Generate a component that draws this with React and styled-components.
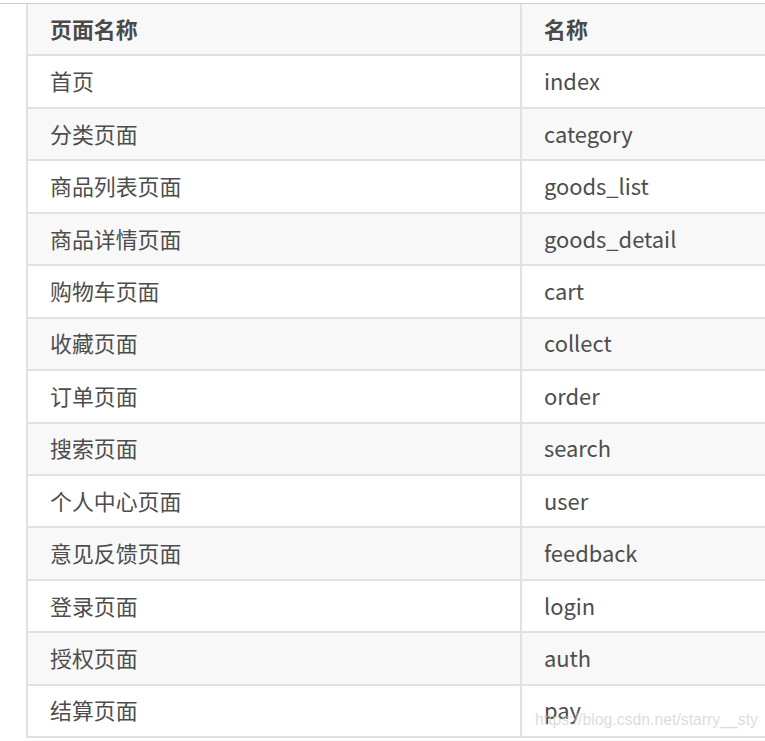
import React from "react";
import styled, { createGlobalStyle } from "styled-components";

const Global = createGlobalStyle`
  html, body { margin: 0; padding: 0; background: #fff; }
  body { overflow: hidden; }
`;

const Page = styled.div`
  width: 765px;
  height: 741px;
  overflow: hidden;
  position: relative;
  background: #fff;
  padding-top: 3px;
  box-sizing: border-box;
`;

const TopRule = styled.div`
  height: 1px;
  background: #cfcfcf;
`;

const Table = styled.div`
  margin-left: 26px;
  width: 800px;
  border-left: 2px solid #dfe2e5;
  font-family: "Noto Sans CJK SC", "Noto Sans", sans-serif;
  font-size: 21.9px;
  color: #4d4d4d;
`;

const Row = styled.div`
  display: grid;
  grid-template-columns: 492px 1fr;
  height: 52.45px;
  box-sizing: border-box;
  border-bottom: 2px solid #dfe2e5;
  background: ${(p) => (p.$shade ? "#f8f8f8" : "#fff")};
  font-weight: ${(p) => (p.$head ? 700 : 400)};
  color: ${(p) => (p.$head ? "#4a4a4a" : "#4d4d4d")};
`;

const Cell = styled.div`
  display: flex;
  align-items: center;
  padding-left: 22px;
  padding-bottom: 1px;
  border-left: ${(p) => (p.$second ? "2px solid #dfe2e5" : "none")};
  white-space: nowrap;
  line-height: 1;
`;

const Watermark = styled.div`
  position: absolute;
  left: 535px;
  top: 711px;
  font-family: "Liberation Sans", Arial, sans-serif;
  font-size: 15.8px;
  color: rgba(205, 205, 205, 0.7);
  white-space: nowrap;
  pointer-events: none;
`;

const rows = [
  ["首页", "index"],
  ["分类页面", "category"],
  ["商品列表页面", "goods_list"],
  ["商品详情页面", "goods_detail"],
  ["购物车页面", "cart"],
  ["收藏页面", "collect"],
  ["订单页面", "order"],
  ["搜索页面", "search"],
  ["个人中心页面", "user"],
  ["意见反馈页面", "feedback"],
  ["登录页面", "login"],
  ["授权页面", "auth"],
  ["结算页面", "pay"],
];

export default function App() {
  return (
    <Page>
      <Global />
      <TopRule />
      <Table>
        <Row $head $shade>
          <Cell>页面名称</Cell>
          <Cell $second>名称</Cell>
        </Row>
        {rows.map(([a, b], i) => (
          <Row key={b} $shade={i % 2 === 1}>
            <Cell>{a}</Cell>
            <Cell $second>{b}</Cell>
          </Row>
        ))}
      </Table>
      <Watermark>https://blog.csdn.net/starry__sty</Watermark>
    </Page>
  );
}
